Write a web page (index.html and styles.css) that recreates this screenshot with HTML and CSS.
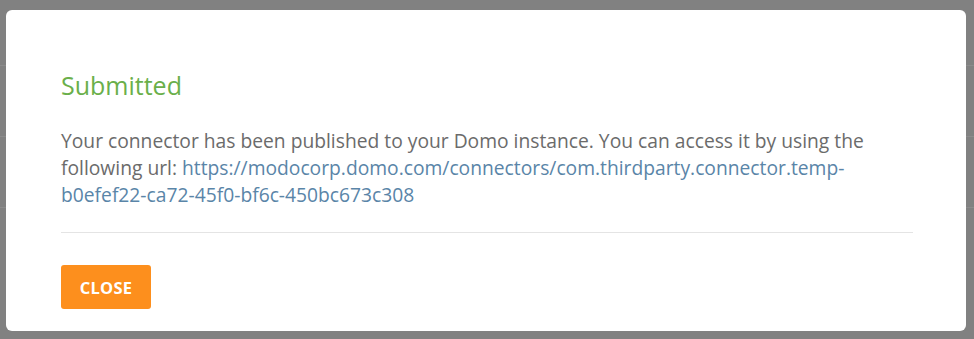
FILE: index.html
```html
<!DOCTYPE html>
<html>
<head>
<meta charset="utf-8">
<link rel="stylesheet" href="styles.css">
</head>
<body>
<div class="backdrop">
  <div class="bg-rows">
    <div class="bg-row"></div>
    <div class="bg-row"></div>
    <div class="bg-row"></div>
  </div>
  <div class="modal">
    <h2 class="title">Submitted</h2>
    <p class="message">Your connector has been published to your Domo instance. You can access it by using the following url: <a class="link" href="#">https://modocorp.domo.com/connectors/com.thirdparty.connector.temp-b0efef22-ca72-45f0-bf6c-450bc673c308</a></p>
    <hr class="divider">
    <button class="btn-close">CLOSE</button>
  </div>
</div>
</body>
</html>
```

FILE: styles.css
```css
html, body {
  margin: 0;
  padding: 0;
}
body {
  width: 974px;
  height: 339px;
  background: #818181;
  font-family: "Open Sans", "Noto Sans", sans-serif;
  overflow: hidden;
}
.backdrop {
  position: relative;
  width: 974px;
  height: 339px;
  padding: 10px 8px 8px 6px;
  box-sizing: border-box;
}
.bg-rows {
  position: absolute;
  left: 0;
  top: 0;
  width: 974px;
}
.bg-row {
  height: 70px;
  border-bottom: 1px solid #8c8c8c;
}
.bg-row:first-child {
  height: 65px;
}
.modal {
  position: relative;
  width: 960px;
  height: 321px;
  background: #ffffff;
  border-radius: 6px;
  box-sizing: border-box;
  padding: 58px 53px 22px 55px;
}
.title {
  margin: 0;
  font-size: 25px;
  line-height: 34px;
  font-weight: 400;
  color: #6aaf4a;
}
.message {
  margin: 25px 0 0 0;
  font-size: 19.25px;
  line-height: 27px;
  color: #6b6b6b;
}
.link {
  color: #5a85a8;
  text-decoration: none;
}
.divider {
  margin: 24px 0 0 0;
  border: 0;
  height: 1px;
  background: #e4e4e4;
}
.btn-close {
  display: block;
  margin-top: 32px;
  width: 90px;
  height: 44px;
  border: 0;
  border-radius: 3px;
  background: #fd8f1d;
  color: #ffffff;
  font-family: "Open Sans", "Noto Sans", sans-serif;
  font-weight: 700;
  font-size: 16.5px;
  letter-spacing: 0.2px;
  padding: 0;
}
```
